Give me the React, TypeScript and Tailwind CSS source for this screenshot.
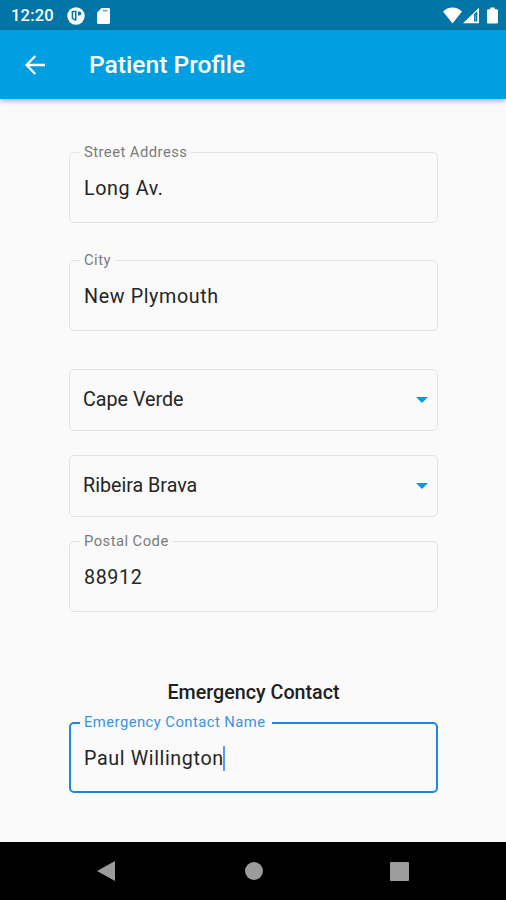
/**
 * App.tsx
 * Patient profile form — address and emergency contact fields.
 */

type OutlinedFieldProps = {
  label: string;
  value: string;
  focused?: boolean;
  className?: string;
};

type SelectFieldProps = {
  value: string;
  className?: string;
};

/**
 * Android status bar with clock, notifications and signal icons.
 */
function StatusBar(): React.ReactElement {
  return (
    <div className="flex h-[30px] shrink-0 items-center bg-[#0075a6] pl-[11px] text-white">
      <span className="w-[56px] whitespace-nowrap pt-[2px] text-[16.5px] leading-[30px] font-medium tracking-[0.2px]">
        12:20
      </span>
      <svg className="mt-px h-[18px] w-[18px]" viewBox="0 0 18 18">
        <circle cx="9" cy="9" r="8.7" fill="#fff" />
        <path d="M5.6 4.6h3.2v8.6" fill="none" stroke="#0075a6" strokeWidth="1.5" />
        <path d="M5.4 4v7.4l3.4 2" fill="none" stroke="#0075a6" strokeWidth="1.5" />
        <path d="M11 4.4h1.2a2.1 2.1 0 0 1 0 4.2H11z" fill="#0075a6" />
      </svg>
      <svg className="ml-3 mt-px h-4 w-[13px]" viewBox="0 0 13 16">
        <path d="M4.5 0H11.6Q13 0 13 1.4V14.6Q13 16 11.6 16H1.4Q0 16 0 14.6V4.8z" fill="#fff" />
        <path d="M5.6 2.6h5" stroke="#67a9c5" strokeWidth="1.6" />
      </svg>
      <svg className="ml-auto h-[17px] w-[19px]" viewBox="0 0 19 17">
        <path d="M0 4.4Q4.2 .6 9.5 .6T19 4.4L9.5 16.4z" fill="#fff" />
      </svg>
      <svg className="ml-[1px] h-[17px] w-[16px]" viewBox="0 0 16 17">
        <path d="M0 16.3L16 .8V16.3zM11 7.2V14.6H14.3V4z" fill="#fff" fillRule="evenodd" />
        <path d="M11.7 7.5h1.5v7h-1.5z" fill="#fff" opacity=".3" />
      </svg>
      <svg className="ml-2 mr-[8px] h-[17px] w-[11px]" viewBox="0 0 11 17">
        <path d="M3.3 .4h4.4v1.8h2Q11 2.2 11 3.5V15.2Q11 16.5 9.7 16.5H1.3Q0 16.5 0 15.2V3.5Q0 2.2 1.3 2.2h2z" fill="#fff" />
      </svg>
    </div>
  );
}

/**
 * Text field with the label set into its outline.
 */
function OutlinedField({ label, value, focused = false, className = "" }: OutlinedFieldProps): React.ReactElement {
  return (
    <fieldset
      className={`h-20 rounded-[5px] ${
        focused ? "border-2 border-[#2088dc] pl-[9px]" : "border border-[#e2e3e4] pl-[10px]"
      } ${className}`}
    >
      <legend
        className={`whitespace-nowrap px-1 text-[14.8px] tracking-[0.45px] ${
          focused ? "h-5 pr-[6px] leading-[18px] text-[#3b93e6]" : "h-[19px] leading-[18px] text-[#7b7b7b]"
        }`}
      >
        {label}
      </legend>
      <div className={`flex items-center pl-1 text-[19.7px] text-[#252525] ${focused ? "h-[51px]" : "h-[54px]"}`}>
        <span className="tracking-[0.62px]">{value}</span>
        {focused && <span className="-ml-px h-[25px] w-[2px] bg-[#5a9bf0]" />}
      </div>
    </fieldset>
  );
}

/**
 * Outlined dropdown showing its current value.
 */
function SelectField({ value, className = "" }: SelectFieldProps): React.ReactElement {
  return (
    <div
      className={`flex h-[62px] items-center justify-between rounded-[5px] border border-[#e2e3e4] pr-[9px] pl-[13px] text-[19.7px] text-[#252525] ${className}`}
    >
      <span>{value}</span>
      <svg className="h-[6px] w-3" viewBox="0 0 12 6">
        <path d="M0 0h12L6 6z" fill="#1496d8" />
      </svg>
    </div>
  );
}

export default function App(): React.ReactElement {
  return (
    <div className="flex h-[900px] w-[506px] flex-col overflow-hidden bg-[#fafafa] font-[Roboto,sans-serif]">
      <StatusBar />
      <header className="flex h-[69px] shrink-0 items-center bg-[#009fe1] pl-[25px] text-white shadow-[0_2px_5px_rgba(0,0,0,0.3)]">
        <svg className="h-5 w-5" viewBox="0 0 20 20" fill="none" stroke="#fff" strokeWidth="2.3">
          <path d="M20 10H1.8M10.3 1L1.5 10l8.8 9" />
        </svg>
        <h1 className="ml-[44px] pt-[2px] text-[24.6px] font-medium">Patient Profile</h1>
      </header>

      <main className="flex flex-1 flex-col px-[69px] pt-11 pr-[68px]">
        <OutlinedField label="Street Address" value="Long Av." />
        <OutlinedField label="City" value="New Plymouth" className="mt-7" />
        <SelectField value="Cape Verde" className="mt-[38px]" />
        <SelectField value="Ribeira Brava" className="mt-6" />
        <OutlinedField label="Postal Code" value="88912" className="mt-[15px]" />
        <h2 className="mt-[68px] h-[25px] text-center text-[19.7px] leading-[26px] font-medium text-[#202020]">
          Emergency Contact
        </h2>
        <OutlinedField label="Emergency Contact Name" value="Paul Willington" focused className="mt-2" />
      </main>

      <nav className="flex h-[58px] shrink-0 items-center bg-black pl-[97px]">
        <svg className="h-5 w-[18px]" viewBox="0 0 18 20">
          <path d="M18 0v20L0 10z" fill="#9c9c9c" />
        </svg>
        <span className="ml-[130px] h-[18px] w-[18px] rounded-full bg-[#9c9c9c]" />
        <span className="ml-[127px] h-[19px] w-[19px] rounded-[1px] bg-[#9c9c9c]" />
      </nav>
    </div>
  );
}
